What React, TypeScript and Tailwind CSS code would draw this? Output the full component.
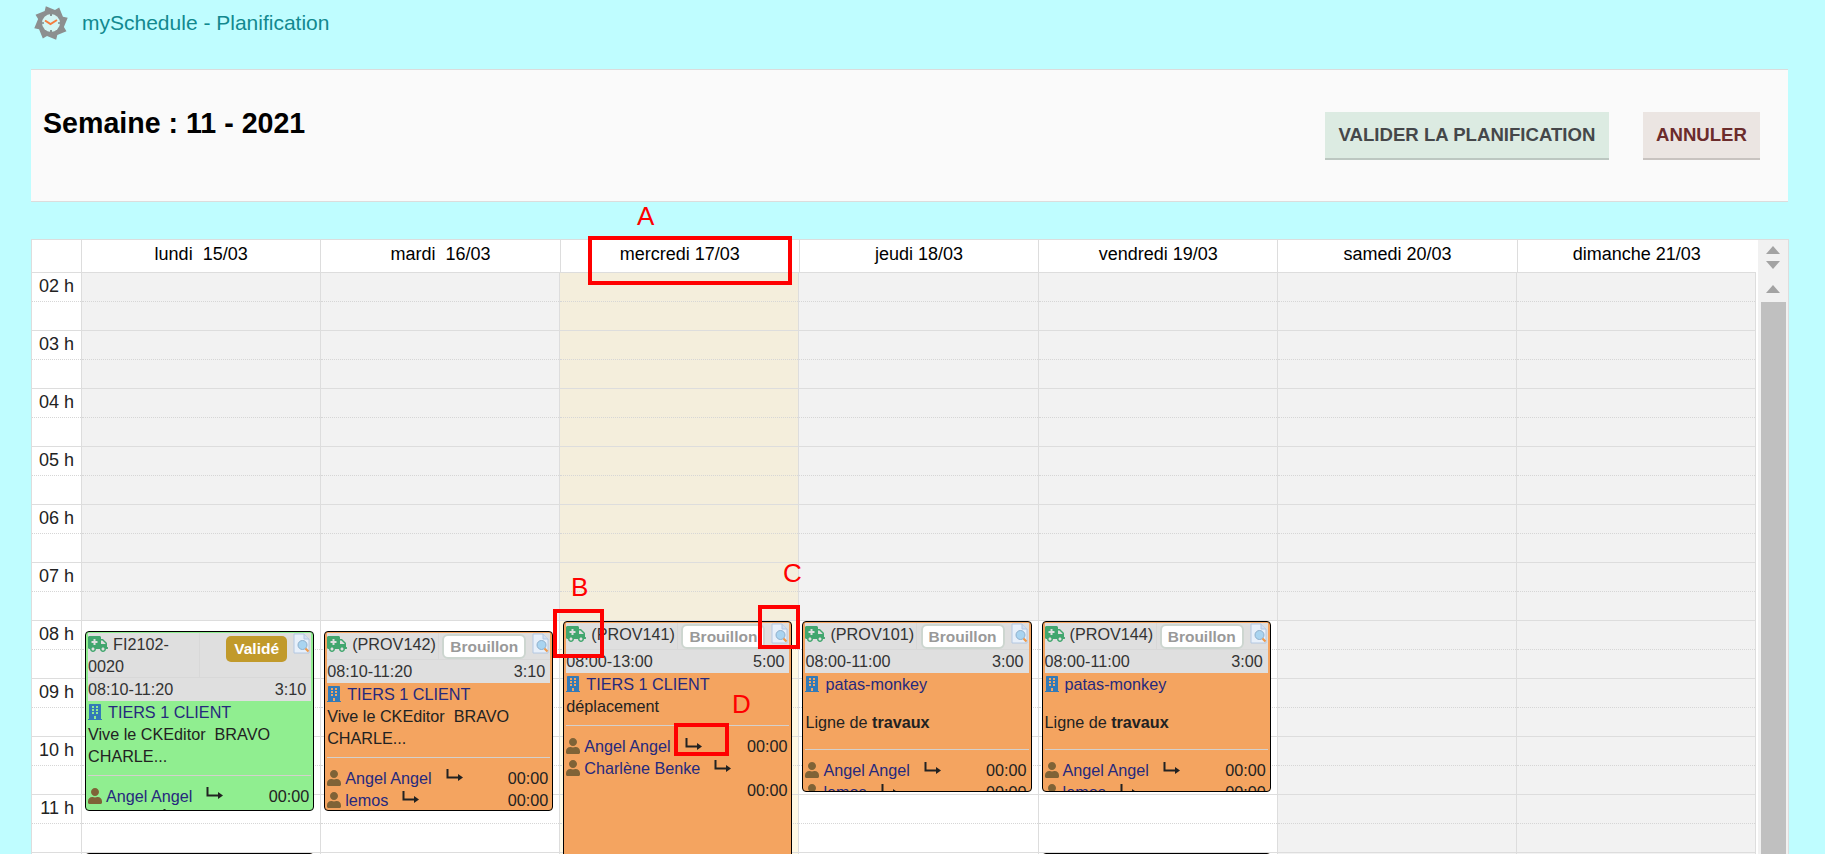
import React from "react";
import { FaAmbulance, FaBuilding, FaUser } from "react-icons/fa";

const HOUR_H = 58;
const hours = ["02", "03", "04", "05", "06", "07", "08", "09", "10", "11", "12"];
const days = [
  "lundi\u00a0\u00a015/03",
  "mardi\u00a0\u00a016/03",
  "mercredi\u00a017/03",
  "jeudi\u00a018/03",
  "vendredi\u00a019/03",
  "samedi\u00a020/03",
  "dimanche\u00a021/03",
];

type Assignee = { name: string; wrap?: boolean };
type Slot = {
  day: number;
  ref: string;
  status: "Validé" | "Brouillon";
  start: number;
  end: number;
  time: string;
  duration: string;
  client: string;
  body: React.ReactNode;
  users: Assignee[];
};

const cke = (
  <p className="mb-2">
    Vive le CKEditor&nbsp; BRAVO
    <br />
    CHARLE...
  </p>
);
const travaux = (
  <p className="py-4">
    Ligne de <b>travaux</b>
  </p>
);

const slots: Slot[] = [
  { day: 0, ref: "FI2102-0020", status: "Validé", start: 8 * 60 + 10, end: 11 * 60 + 20, time: "08:10-11:20", duration: "3:10", client: "TIERS 1 CLIENT", body: cke, users: [{ name: "Angel Angel" }, { name: "lemos" }] },
  { day: 1, ref: "(PROV142)", status: "Brouillon", start: 8 * 60 + 10, end: 11 * 60 + 20, time: "08:10-11:20", duration: "3:10", client: "TIERS 1 CLIENT", body: cke, users: [{ name: "Angel Angel" }, { name: "lemos" }] },
  { day: 2, ref: "(PROV141)", status: "Brouillon", start: 8 * 60, end: 13 * 60, time: "08:00-13:00", duration: "5:00", client: "TIERS 1 CLIENT", body: <p className="mb-2">déplacement</p>, users: [{ name: "Angel Angel" }, { name: "Charlène Benke", wrap: true }] },
  { day: 3, ref: "(PROV101)", status: "Brouillon", start: 8 * 60, end: 11 * 60, time: "08:00-11:00", duration: "3:00", client: "patas-monkey", body: travaux, users: [{ name: "Angel Angel" }, { name: "lemos" }] },
  { day: 4, ref: "(PROV144)", status: "Brouillon", start: 8 * 60, end: 11 * 60, time: "08:00-11:00", duration: "3:00", client: "patas-monkey", body: travaux, users: [{ name: "Angel Angel" }, { name: "lemos" }] },
];

function Logo() {
  const pts: string[] = [];
  for (let i = 0; i < 8; i++) {
    const a = (i * Math.PI) / 4 - 0.3;
    const b = a + 0.6;
    pts.push(`${18 + 17.5 * Math.cos(a)},${18 + 17.5 * Math.sin(a)}`);
    pts.push(`${18 + 13.5 * Math.cos(b)},${18 + 13.5 * Math.sin(b)}`);
  }
  return (
    <svg width="36" height="36" viewBox="0 0 36 36">
      <polygon points={pts.join(" ")} fill="#8c8f8f" />
      <circle cx="18" cy="18" r="9" fill="#d3f6f4" />
      <path d="M18 9v2M18 25v2M9 18h2M25 18h2" stroke="#555" strokeWidth="1.2" />
      <path d="M12 15.5L17.5 19L24 15" stroke="#f47c3c" strokeWidth="2" fill="none" />
    </svg>
  );
}

function DocIcon() {
  return (
    <svg width="17" height="21" viewBox="0 0 17 21" className="shrink-0 -mt-[1px]">
      <path d="M1 1h10l5 5v14H1z" fill="#e8f0fa" stroke="#b4c8e2" />
      <path d="M11 1v5h5" fill="#d3dff0" stroke="#b4c8e2" />
      <circle cx="9.5" cy="12" r="4.5" fill="#a9d4f0" stroke="#8fb0cc" />
      <path d="M12.5 15.5l3 3" stroke="#ee9a4d" strokeWidth="2.2" />
    </svg>
  );
}

function LinkArrow() {
  return (
    <svg width="17" height="12" viewBox="0 0 17 12" className="ml-[14px] -mt-[5px] shrink-0">
      <path d="M1.5 0v8.5H12" stroke="#222" strokeWidth="2" fill="none" />
      <polygon points="12,5 17,8.5 12,12" fill="#222" />
    </svg>
  );
}

function UserRow({ user }: { user: Assignee }) {
  return (
    <div className="flex flex-wrap items-center leading-[22px]">
      <FaUser className="text-[#7f6337] w-[14px] h-[16px] shrink-0" />
      <span className="ml-[4px] text-[#26297d]">{user.name}</span>
      <LinkArrow />
      <span className={user.wrap ? "basis-full text-right pr-[2px]" : "ml-auto pr-[2px]"}>00:00</span>
    </div>
  );
}

function EventCard({ slot }: { slot: Slot }) {
  const top = ((slot.start - 120) / 60) * HOUR_H;
  const height = ((slot.end - slot.start) / 60) * HOUR_H - 3;
  const validated = slot.status === "Validé";
  return (
    <div
      className={`absolute left-[3px] right-[6px] overflow-hidden rounded-[4px] border border-black px-[2px] pt-[1px] text-[16.2px] leading-[22px] text-[#222] ${
        validated ? "bg-[#90ee90]" : "bg-[#f4a460]"
      }`}
      style={{ top, height }}
    >
      <div className="bg-[#dfdfdf] text-[#333]">
        <div className="flex border-b border-[#d8d8d8]">
          <div className="w-[112px] shrink-0 border-r border-[#d8d8d8]">
            <FaAmbulance className="inline-block w-[20px] h-[16px] text-[#41a66e] mr-[5px] align-[-2px]" />
            <span className="whitespace-normal">{slot.ref}</span>
          </div>
          <div className="flex-1 flex justify-end items-start pr-[1px] gap-[6px] pt-[1px]">
            {validated ? (
              <span className="mt-[2px] h-[26px] w-[61px] rounded-[5px] bg-[#c19a2b] text-center text-[15.5px] font-bold leading-[26px] text-white">
                Validé
              </span>
            ) : (
              <span className="h-[25px] w-[84px] rounded-[6px] border-2 border-[#cdd6d0] bg-white text-center text-[15.5px] font-bold leading-[21px] text-[#999]">
                Brouillon
              </span>
            )}
            <DocIcon />
          </div>
        </div>
        <div className="flex justify-between pr-[5px] leading-[23px]">
          <span>{slot.time}</span>
          <span>{slot.duration}</span>
        </div>
      </div>
      <div className="flex items-center text-[#26297d]">
        <FaBuilding className="w-[14px] h-[18px] text-[#337ab7] mr-[6px]" />
        <span>{slot.client}</span>
      </div>
      {slot.body}
      <div className="border-t border-[#d4d0cc] pt-[9px]">
        {slot.users.map((u) => (
          <UserRow key={u.name} user={u} />
        ))}
      </div>
    </div>
  );
}

function DayColumn({ index }: { index: number }) {
  const weekend = index >= 5;
  const today = index === 2;
  return (
    <div className="relative flex-1 border-r border-[#ddd]">
      {hours.map((h, i) => {
        const off = i < 6 || weekend;
        let bg = off ? "bg-[#f2f2f2]" : "bg-white";
        if (today) bg = off ? "bg-[#f4eedc]" : "bg-[#fef9e5]";
        return (
          <div key={h} className={`h-[58px] border-b border-[#ddd] ${bg}`}>
            <div className="h-[29px] border-b border-dotted border-[#d6d6d6]" />
          </div>
        );
      })}
      {slots
        .filter((s) => s.day === index)
        .map((s) => (
          <EventCard key={s.ref} slot={s} />
        ))}
      {(index === 0 || index === 4) && (
        <div className="absolute left-[3px] right-[6px] top-[580px] h-[20px] rounded-[4px] border border-black bg-[#f4a460]" />
      )}
    </div>
  );
}

function Arrow({ down }: { down?: boolean }) {
  return (
    <svg width="14" height="8" viewBox="0 0 14 8">
      <polygon points={down ? "0,0 14,0 7,8" : "7,0 14,8 0,8"} fill="#a3a3a3" />
    </svg>
  );
}

function Mark({ className }: { className: string }) {
  return <div className={`absolute border-[4px] border-[#ff0000] ${className}`} />;
}

function Letter({ className, children }: { className: string; children: string }) {
  return <span className={`absolute text-[26px] leading-[26px] text-[#ff0000] ${className}`}>{children}</span>;
}

export default function App() {
  return (
    <div className="relative h-screen overflow-hidden bg-[#bffdff] font-['Liberation_Sans',Arial,sans-serif] text-black">
      <header className="flex h-[69px] items-start pl-[33px] pt-[5px]">
        <Logo />
        <span className="ml-[13px] mt-[5px] text-[21px] leading-[26px] text-[#12898f]">mySchedule - Planification</span>
      </header>

      <section className="ml-[31px] mr-[37px] flex h-[133px] items-start justify-between border-y border-[#dcdcdc] bg-[#fafafa] pl-[12px] pr-[28px]">
        <h1 className="mt-[36px] text-[28.6px] font-bold leading-[34px]">Semaine : 11 - 2021</h1>
        <div className="mt-[42px] flex gap-[34px]">
          <button className="h-[48px] w-[284px] border-b-2 border-[#bcc7c1] bg-[#dcebe2] text-[18.6px] font-bold text-[#45474a]">
            VALIDER LA PLANIFICATION
          </button>
          <button className="h-[48px] w-[117px] border-b-2 border-[#c8c3c0] bg-[#ebe5e2] text-[18.6px] font-bold text-[#6b2c2c]">
            ANNULER
          </button>
        </div>
      </section>

      <section className="ml-[31px] mr-[36px] mt-[37px] flex border border-[#ddd] bg-white">
        <div className="flex-1 pr-[2px]">
          <div className="flex h-[33px] border-b border-[#ddd] text-[18px]">
            <div className="w-[50px] shrink-0 border-r border-[#ddd]" />
            {days.map((d) => (
              <div key={d} className="flex-1 border-r border-[#ddd] text-center leading-[29px] last:border-r-0">
                {d}
              </div>
            ))}
          </div>
          <div className="flex">
            <div className="w-[50px] shrink-0 border-r border-[#ddd]">
              {hours.map((h) => (
                <div key={h} className="h-[58px] border-b border-[#ddd] text-[#222]">
                  <div className="h-[29px] border-b border-dotted border-[#d6d6d6] pr-[7px] text-right text-[18px] leading-[27px]">
                    {h === "12" ? "" : `${h} h`}
                  </div>
                </div>
              ))}
            </div>
            {days.map((d, i) => (
              <DayColumn key={d} index={i} />
            ))}
          </div>
        </div>
        <div className="flex w-[30px] shrink-0 flex-col items-center bg-[#f1f1f1] px-[2px]">
          <div className="mt-[6px] h-[8px] leading-[0]"><Arrow /></div>
          <div className="mt-[7px] h-[8px] leading-[0]"><Arrow down /></div>
          <div className="mt-[16px] h-[8px] leading-[0]"><Arrow /></div>
          <div className="mt-[9px] w-[25px] flex-1 bg-[#c0c0c0]" />
        </div>
      </section>

      <Letter className="left-[637px] top-[203px]">A</Letter>
      <Mark className="left-[588px] top-[236px] h-[49px] w-[204px]" />
      <Letter className="left-[571px] top-[574px]">B</Letter>
      <Mark className="left-[553px] top-[609px] h-[49px] w-[51px]" />
      <Letter className="left-[783px] top-[560px]">C</Letter>
      <Mark className="left-[758px] top-[605px] h-[44px] w-[42px]" />
      <Letter className="left-[732px] top-[691px]">D</Letter>
      <Mark className="left-[674px] top-[723px] h-[33px] w-[55px]" />
    </div>
  );
}
